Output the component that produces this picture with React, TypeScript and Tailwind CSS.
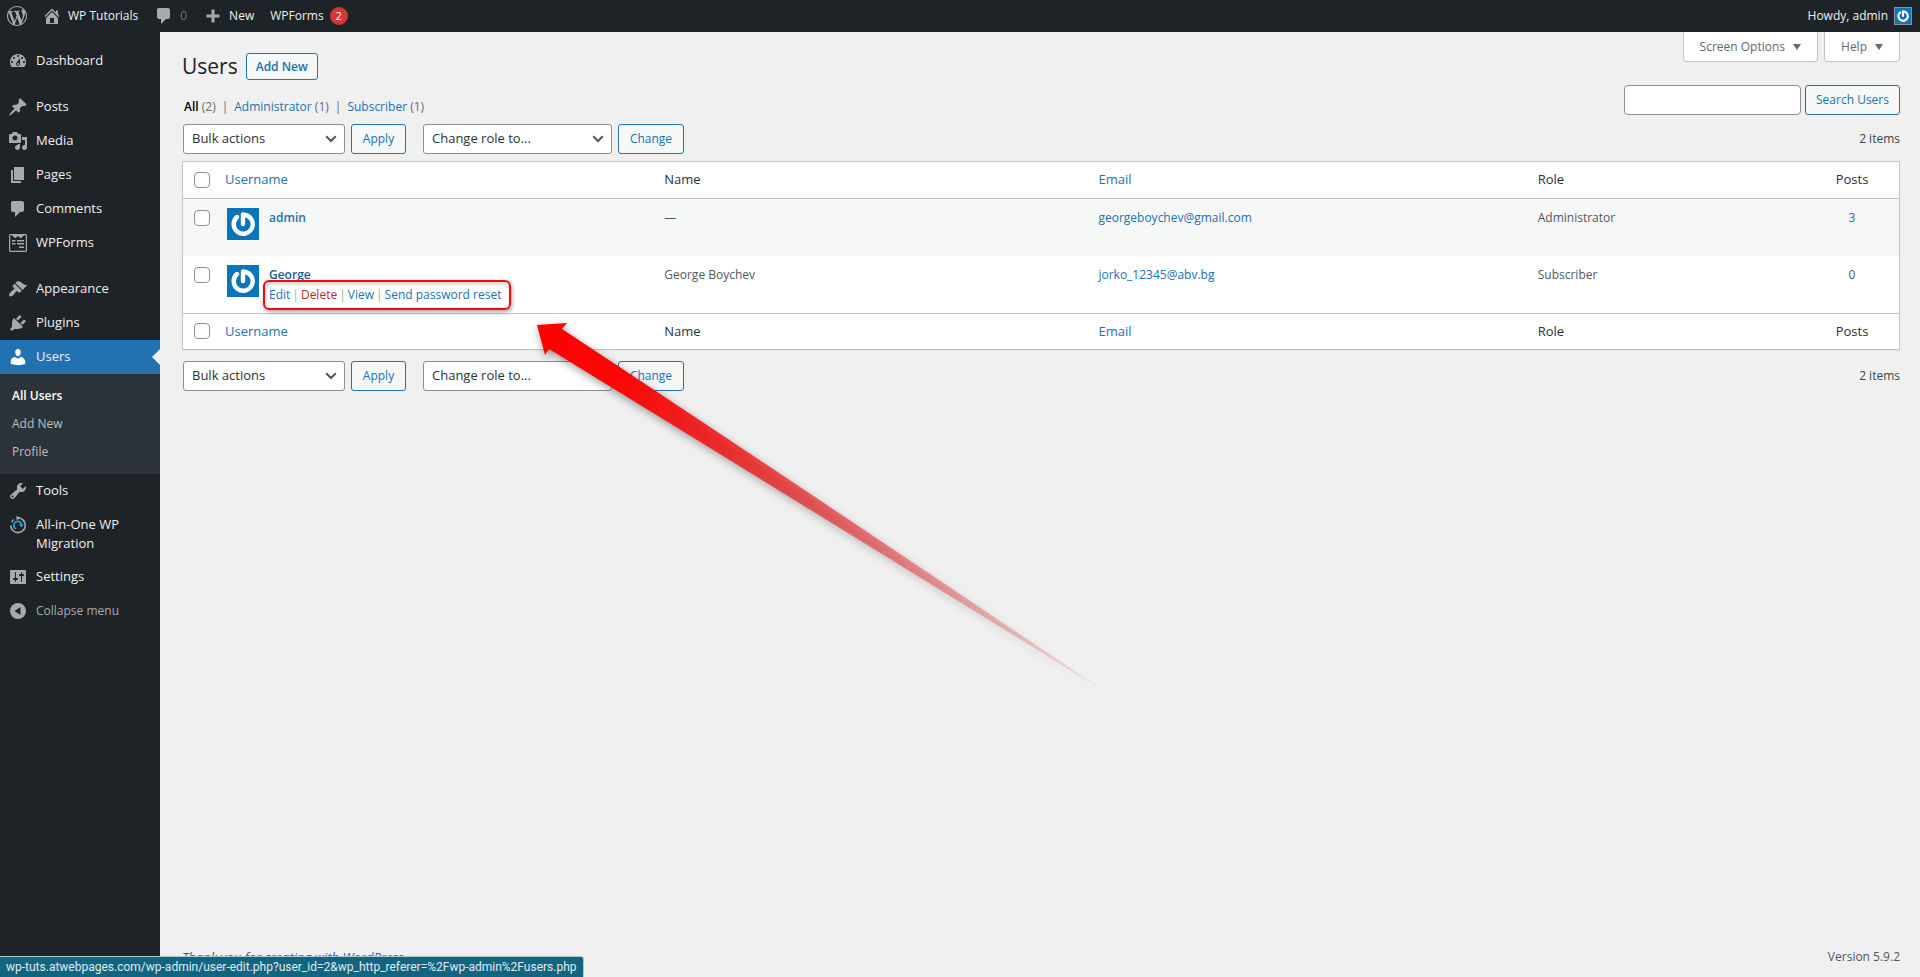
import { useState } from 'react';
import type { ReactNode } from 'react';

const icons = {
  wordpress:
    'M20 10c0-5.51-4.49-10-10-10C4.48 0 0 4.49 0 10c0 5.52 4.48 10 10 10 5.51 0 10-4.48 10-10zM7.78 15.37L4.37 6.22c.55-.02 1.17-.08 1.17-.08.5-.06.44-1.13-.06-1.11 0 0-1.45.11-2.37.11-.18 0-.37 0-.58-.01C4.12 2.69 6.87 1.11 10 1.11c2.33 0 4.45.87 6.05 2.34-.68-.11-1.65.39-1.65 1.58 0 .74.45 1.36.9 2.1.35.61.55 1.36.55 2.46 0 1.49-1.4 5-1.4 5l-3.03-8.37c.54-.02.82-.17.82-.17.5-.05.44-1.25-.06-1.22 0 0-1.44.12-2.38.12-.87 0-2.33-.12-2.33-.12-.5-.03-.56 1.2-.06 1.22l.92.08 1.26 3.41zM17.41 10c.24-.64.74-1.87.43-4.25.7 1.29 1.05 2.71 1.05 4.25 0 3.29-1.73 6.24-4.4 7.78.97-2.59 1.94-5.2 2.92-7.78zM6.1 18.09C3.12 16.65 1.11 13.53 1.11 10c0-1.3.23-2.48.72-3.59C3.25 10.3 4.67 14.2 6.1 18.09zm4.03-6.63l2.58 6.98c-.86.29-1.76.45-2.71.45-.79 0-1.57-.11-2.29-.33.81-2.38 1.62-4.74 2.42-7.1z',
  home: 'M16 8.5l1.53 1.53-1.06 1.06L10 4.6l-6.47 6.49-1.06-1.06L10 2.5l4 4v-2h2v4zm-6-2.46l6 5.99V18H4v-5.97zM12 17v-5H8v5h4z',
  plus: 'M8.5 3.5h3v5h5v3h-5v5h-3v-5h-5v-3h5z',
  dashboard:
    'M3.76 16h12.48c1.1-1.37 1.76-3.11 1.76-5 0-4.42-3.58-8-8-8s-8 3.58-8 8c0 1.89.66 3.63 1.76 5zM10 4c.55 0 1 .45 1 1s-.45 1-1 1-1-.45-1-1 .45-1 1-1zM6 6c.55 0 1 .45 1 1s-.45 1-1 1-1-.45-1-1 .45-1 1-1zm8 0c.55 0 1 .45 1 1s-.45 1-1 1-1-.45-1-1 .45-1 1-1zm-5.37 5.55L12 7v6c0 1.1-.9 2-2 2s-2-.9-2-2c0-.57.24-1.08.63-1.45zM4 10c.55 0 1 .45 1 1s-.45 1-1 1-1-.45-1-1 .45-1 1-1zm12 0c.55 0 1 .45 1 1s-.45 1-1 1-1-.45-1-1 .45-1 1-1zm-5 3c0-.55-.45-1-1-1s-1 .45-1 1 .45 1 1 1 1-.45 1-1z',
  post: 'M10.44 3.02l1.82-1.82 6.36 6.35-1.83 1.82c-1.05-.68-2.48-.57-3.41.36l-.75.75c-.92.93-1.04 2.35-.35 3.41l-1.83 1.82-2.41-2.41-2.8 2.79c-.42.42-3.38 2.71-3.8 2.29s1.86-3.39 2.28-3.81l2.79-2.79L4.1 9.36l1.83-1.82c1.05.69 2.48.57 3.4-.36l.75-.75c.93-.92 1.05-2.35.36-3.41z',
  media:
    'M13 11V4c0-.55-.45-1-1-1h-1.67L9 1H5L3.67 3H2c-.55 0-1 .45-1 1v7c0 .55.45 1 1 1h10c.55 0 1-.45 1-1zM7 4.5c1.38 0 2.5 1.12 2.5 2.5S8.38 9.5 7 9.5 4.5 8.38 4.5 7 5.62 4.5 7 4.5zM14 6h5v10.5c0 1.38-1.12 2.5-2.5 2.5S14 17.88 14 16.5s1.12-2.5 2.5-2.5c.17 0 .34.02.5.05V9h-3V6zm-4 8.05V13h2v3.5c0 1.38-1.12 2.5-2.5 2.5S7 17.88 7 16.5 8.12 14 9.5 14c.17 0 .34.02.5.05z',
  page: 'M6 15V2h10v13H6zm-1 1h8v2H3V5h2v11z',
  comment:
    'M5 2h9c1.1 0 2 .9 2 2v7c0 1.1-.9 2-2 2h-2l-5 5v-5H5c-1.1 0-2-.9-2-2V4c0-1.1.9-2 2-2z',
  forms:
    'M2.5 1h15c.8 0 1.5.7 1.5 1.5v15c0 .8-.7 1.5-1.5 1.5h-15C1.7 19 1 18.3 1 17.5v-15C1 1.7 1.7 1 2.5 1zM2.2 2.2v15.6h15.6V2.2h-1.6L12.8 5.2 10 3 7.2 5.2 3.8 2.2zM4 7h3.5v1.5H4zM9 7h7v1.5H9zM4 10h3.5v1.5H4zM9 10h7v1.5H9zM11 13.5h5V15h-5z',
  appearance:
    'M14.48 11.06L7.41 3.99l1.5-1.5c.5-.56 2.3-.47 3.51.32 1.21.8 1.43 1.28 2.91 2.1 1.18.64 2.45 1.26 4.45.85zm-.71.71L6.7 4.7 4.93 6.47c-.39.39-.39 1.02 0 1.41l1.06 1.06c.39.39.39 1.03 0 1.42-.6.6-1.43 1.11-2.21 1.69-.35.26-.7.53-1.01.84C1.43 14.23.4 16.08 1.4 17.07c.99 1 2.84-.03 4.18-1.36.31-.31.58-.66.85-1.02.57-.78 1.08-1.61 1.69-2.21.39-.39 1.02-.39 1.41 0l1.06 1.06c.39.39 1.02.39 1.41 0z',
  plugins:
    'M13.11 4.36L9.87 7.6 8 5.73l3.24-3.24c.35-.34 1.05-.2 1.56.32.52.51.66 1.21.31 1.55zm-8 1.77l.91-1.12 9.01 9.01-1.19.84c-.71.71-2.63 1.16-3.82 1.16H6.14L4.9 17.26c-.59.59-1.54.59-2.12 0-.59-.58-.59-1.53 0-2.12l1.24-1.24v-3.88c0-1.13.4-3.19 1.09-3.89zm7.26 3.97l3.24-3.24c.34-.35 1.04-.21 1.55.31.52.51.66 1.21.31 1.55l-3.24 3.25z',
  users:
    'M10 9.25c-2.27 0-2.73-3.44-2.73-3.44C7 4.02 7.82 2 9.97 2c2.16 0 2.98 2.02 2.71 3.81 0 0-.41 3.44-2.68 3.44zm0 2.57L12.72 10c2.39 0 4.52 2.33 4.52 4.53v2.49s-3.65 1.13-7.24 1.13c-3.65 0-7.24-1.13-7.24-1.13v-2.49c0-2.25 1.94-4.48 4.47-4.48z',
  tools:
    'M16.68 9.77c-1.34 1.34-3.3 1.67-4.95.99l-5.41 6.52c-.99.99-2.59.99-3.58 0s-.99-2.59 0-3.57l6.52-5.42c-.68-1.65-.35-3.61.99-4.95 1.28-1.28 3.12-1.62 4.72-1.06l-2.89 2.89 2.82 2.82 2.86-2.87c.53 1.58.18 3.39-1.08 4.65zM3.81 16.21c.4.39 1.04.39 1.43 0 .4-.4.4-1.04 0-1.43-.39-.4-1.03-.4-1.43 0-.39.39-.39 1.03 0 1.43z',
  settings:
    'M18 16V4c0-.55-.45-1-1-1H3c-.55 0-1 .45-1 1v12c0 .55.45 1 1 1h14c.55 0 1-.45 1-1zM8 11h1c.55 0 1 .45 1 1s-.45 1-1 1H8v1.5c0 .28-.22.5-.5.5s-.5-.22-.5-.5V13H6c-.55 0-1-.45-1-1s.45-1 1-1h1V5.5c0-.28.22-.5.5-.5s.5.22.5.5V11zm5-2h-1c-.55 0-1-.45-1-1s.45-1 1-1h1V5.5c0-.28.22-.5.5-.5s.5.22.5.5V7h1c.55 0 1 .45 1 1s-.45 1-1 1h-1v5.5c0 .28-.22.5-.5.5s-.5-.22-.5-.5V9z',
  collapse: 'M10 2a8 8 0 1 0 0 16 8 8 0 0 0 0-16zM12.5 6v8L6.5 10z',
};

const Icon = ({ name, className }: { name: keyof typeof icons; className?: string }) => (
  <svg viewBox="0 0 20 20" fillRule="evenodd" className={`size-5 shrink-0 fill-current ${className ?? ''}`}>
    <path d={icons[name]} />
  </svg>
);

const MigrationIcon = () => (
  <svg viewBox="0 0 20 20" fill="none" className="size-5 shrink-0">
    <path d="M10.5 3A7.3 7.3 0 1 1 2.7 10.5" stroke="#a7aaad" strokeWidth="1.6" />
    <path d="M8.5 .8L12.5 3 8.5 5.2z" fill="#a7aaad" />
    <path d="M3.6 7.2a7.3 7.3 0 0 1 2.2-2.7" stroke="#a7aaad" strokeWidth="1.4" />
    <path d="M8.2 13.8A3.9 3.9 0 1 1 13.6 10" stroke="#1e9be0" strokeWidth="1.8" />
    <path d="M10.8 9.6h4.8l-2.3 2.9z" fill="#1e9be0" />
  </svg>
);

const Avatar = ({ className }: { className: string }) => (
  <svg viewBox="0 0 32 32" className={`shrink-0 ${className}`}>
    <rect width="32" height="32" fill="#0a75b9" />
    <path
      d="M10 9A9.5 9.5 0 1 0 17.5 6.8L16 6.5V16"
      fill="none"
      stroke="#fff"
      strokeWidth="4.4"
      strokeLinecap="round"
      strokeLinejoin="round"
    />
  </svg>
);

const MenuItem = ({ icon, children }: { icon: ReactNode; children: ReactNode }) => (
  <a href="#" className="flex gap-2 px-2 py-[7px] leading-[19px] text-[#f0f0f1] hover:text-[#72aee6]">
    <span className="text-[#a7aaad]">{icon}</span>
    <span>{children}</span>
  </a>
);

const Sidebar = () => (
  <nav className="w-40 shrink-0 bg-[#1d2327] pt-3 text-[13px]">
    <MenuItem icon={<Icon name="dashboard" />}>Dashboard</MenuItem>
    <div className="h-3" />
    <MenuItem icon={<Icon name="post" />}>Posts</MenuItem>
    <MenuItem icon={<Icon name="media" />}>Media</MenuItem>
    <MenuItem icon={<Icon name="page" />}>Pages</MenuItem>
    <MenuItem icon={<Icon name="comment" />}>Comments</MenuItem>
    <MenuItem icon={<Icon name="forms" />}>WPForms</MenuItem>
    <div className="h-3" />
    <MenuItem icon={<Icon name="appearance" />}>Appearance</MenuItem>
    <MenuItem icon={<Icon name="plugins" />}>Plugins</MenuItem>
    <div className="relative bg-[#2271b1]">
      <MenuItem icon={<Icon name="users" className="text-white" />}>Users</MenuItem>
      <div className="absolute right-0 top-[9px] border-y-8 border-r-8 border-y-transparent border-r-[#f0f0f1]" />
    </div>
    <ul className="bg-[#2c3338] px-3 py-2 text-xs leading-7 text-[#bdbfc1]">
      <li><a href="#" className="font-semibold text-white">All Users</a></li>
      <li><a href="#">Add New</a></li>
      <li><a href="#">Profile</a></li>
    </ul>
    <MenuItem icon={<Icon name="tools" />}>Tools</MenuItem>
    <MenuItem icon={<MigrationIcon />}>All-in-One WP Migration</MenuItem>
    <MenuItem icon={<Icon name="settings" />}>Settings</MenuItem>
    <button className="flex w-full gap-2 px-2 py-[7px] text-left text-xs leading-[19px] text-[#a7aaad]">
      <Icon name="collapse" />
      <span>Collapse menu</span>
    </button>
  </nav>
);

const AdminBar = () => (
  <header className="flex h-8 items-center justify-between bg-[#1d2327] text-xs text-[#f0f0f1]">
    <div className="flex items-center">
      <a href="#" aria-label="About WordPress" className="px-[7px] text-[#a7aaad]"><Icon name="wordpress" /></a>
      <a href="#" className="flex items-center gap-[6px] px-2">
        <Icon name="home" className="text-[#a7aaad]" />
        <span>WP Tutorials</span>
      </a>
      <a href="#" className="flex items-center gap-[6px] px-2 text-[#a7aaad]">
        <Icon name="comment" />
        <span className="opacity-60">0</span>
      </a>
      <a href="#" className="flex items-center gap-[6px] px-2">
        <Icon name="plus" className="text-[#a7aaad]" />
        <span>New</span>
      </a>
      <a href="#" className="flex items-center gap-[6px] px-2">
        <span>WPForms</span>
        <span className="flex size-[18px] items-center justify-center rounded-full bg-[#d63638] text-[11px] text-white">2</span>
      </a>
    </div>
    <a href="#" className="flex items-center gap-[6px] px-2">
      <span>Howdy, admin</span>
      <Avatar className="size-[18px] border border-[#8c8f94]" />
    </a>
  </header>
);

const buttonClass =
  'h-[30px] rounded-[3px] border border-[#2271b1] bg-[#f6f7f7] text-xs text-[#2271b1] hover:bg-[#f0f0f1]';

const Dropdown = ({ label, className }: { label: string; className: string }) => (
  <div className={`relative ${className}`}>
    <select
      aria-label={label}
      className="h-[30px] w-full appearance-none rounded-[3px] border border-[#8c8f94] bg-white pl-2 pr-6 text-[13px] text-[#2c3338]"
    >
      <option>{label}</option>
    </select>
    <svg
      viewBox="0 0 20 20"
      className="pointer-events-none absolute right-[6px] top-[7px] size-4 fill-none stroke-[#555]"
      strokeWidth="2.5"
    >
      <path d="M4 6.5l6 6 6-6" />
    </svg>
  </div>
);

const TableNav = () => (
  <div className="flex justify-between pl-px">
    <div className="flex">
      <Dropdown label="Bulk actions" className="w-[162px]" />
      <button className={`${buttonClass} ml-[6px] w-[55px]`}>Apply</button>
      <Dropdown label="Change role to..." className="ml-[17px] w-[189px]" />
      <button className={`${buttonClass} ml-[6px] w-[66px]`}>Change</button>
    </div>
    <span className="pt-[6px] text-xs leading-[18px] text-[#3c434a]">2 items</span>
  </div>
);

const Check = ({ label, checked, onChange }: { label: string; checked: boolean; onChange: () => void }) => (
  <input
    type="checkbox"
    aria-label={label}
    checked={checked}
    onChange={onChange}
    className="block size-4 appearance-none rounded-[4px] border border-[#8c8f94] bg-white checked:bg-[#2271b1]"
  />
);

const users = [
  { login: 'admin', name: '—', email: 'georgeboychev@gmail.com', role: 'Administrator', posts: 3 },
  { login: 'George', name: 'George Boychev', email: 'jorko_12345@abv.bg', role: 'Subscriber', posts: 0 },
];

const RowActions = () => (
  <div className="relative flex w-fit gap-[2px] pr-1 text-xs leading-[18px] whitespace-nowrap text-[#a7aaad]">
    <a href="#" className="text-[#2271b1]">Edit</a>
    <span>|</span>
    <a href="#" className="text-[#b32d2e]">Delete</a>
    <span>|</span>
    <a href="#" className="text-[#2271b1]">View</a>
    <span>|</span>
    <a href="#" className="text-[#2271b1]">Send password reset</a>
    <div className="pointer-events-none absolute -inset-[6px] rounded-md border-2 border-[#f00a0a] shadow-[1px_2px_4px_rgba(0,0,0,0.35),inset_1px_2px_4px_rgba(0,0,0,0.2)]" />
  </div>
);

const UsersTable = () => {
  const [selected, setSelected] = useState<string[]>([]);
  const allSelected = selected.length === users.length;

  const toggle = (login: string) =>
    setSelected(selected.includes(login) ? selected.filter((l) => l !== login) : [...selected, login]);
  const toggleAll = () => setSelected(allSelected ? [] : users.map((u) => u.login));

  const headings = (
    <tr className="h-9 text-left text-[13px] text-[#2c3338]">
      <td className="pl-[11px]"><Check label="Select all" checked={allSelected} onChange={toggleAll} /></td>
      <th className="px-[10px] font-normal"><a href="#" className="text-[#2271b1]">Username</a></th>
      <th className="px-[10px] font-normal">Name</th>
      <th className="px-[10px] font-normal"><a href="#" className="text-[#2271b1]">Email</a></th>
      <th className="px-[10px] font-normal">Role</th>
      <th className="text-center font-normal">Posts</th>
    </tr>
  );

  return (
    <div className="border border-[#c3c4c7] bg-white shadow-[0_1px_1px_rgba(0,0,0,0.04)]">
      <table className="w-full table-fixed text-xs text-[#50575e]">
        <colgroup>
          <col className="w-8" />
          <col className="w-[25.6%]" />
          <col className="w-[25.3%]" />
          <col className="w-[25.6%]" />
          <col />
          <col className="w-[94px]" />
        </colgroup>
        <thead className="border-b border-[#c3c4c7]">{headings}</thead>
        <tbody>
          {users.map((user, i) => (
            <tr key={user.login} className="h-[57px] align-top leading-[18px] first:h-[58px] odd:bg-[#f6f7f7]">
              <td className="pt-[11px] pl-[11px]">
                <Check
                  label={`Select ${user.login}`}
                  checked={selected.includes(user.login)}
                  onChange={() => toggle(user.login)}
                />
              </td>
              <td className="px-[10px] pt-[9px]">
                <div className="flex gap-[10px] pl-[2px]">
                  <Avatar className="size-8" />
                  <div className="pt-px">
                    <a href="#" className={i === 1 ? 'block font-semibold text-[#135e96]' : 'block font-semibold text-[#2271b1]'}>
                      {user.login}
                    </a>
                    {i === 1 && <div className="pt-[2px]"><RowActions /></div>}
                  </div>
                </div>
              </td>
              <td className="px-[10px] pt-[10px]">{user.name}</td>
              <td className="px-[10px] pt-[10px]"><a href="#" className="text-[#2271b1]">{user.email}</a></td>
              <td className="px-[10px] pt-[10px]">{user.role}</td>
              <td className="pt-[10px] text-center">
                {user.posts > 0 ? <a href="#" className="text-[#2271b1]">{user.posts}</a> : user.posts}
              </td>
            </tr>
          ))}
        </tbody>
        <tfoot className="border-t border-[#c3c4c7]">{headings}</tfoot>
      </table>
    </div>
  );
};

const Arrow = () => (
  <svg
    width="600"
    height="390"
    viewBox="530 315 600 390"
    className="pointer-events-none absolute left-[530px] top-[315px] drop-shadow-[1px_3px_4px_rgba(0,0,0,0.4)]"
  >
    <defs>
      <linearGradient id="fade" gradientUnits="userSpaceOnUse" x1="537" y1="325" x2="1111" y2="695">
        <stop offset="0" stopColor="#ff0000" />
        <stop offset="0.15" stopColor="#fb0707" />
        <stop offset="1" stopColor="#de3030" stopOpacity="0.1" />
      </linearGradient>
    </defs>
    <path d="M537 325L567 323L562 329Q800 486 1107 693Q790 497 549 349L545 355Z" fill="url(#fade)" />
  </svg>
);

const ScreenTab = ({ children }: { children: ReactNode }) => (
  <button className="flex h-[30px] items-center gap-2 rounded-b border border-t-0 border-[#c3c4c7] bg-white px-4 text-xs text-[#646970]">
    {children}
    <svg viewBox="0 0 8 6" className="h-[6px] w-2 fill-[#646970]">
      <path d="M0 0h8L4 6z" />
    </svg>
  </button>
);

export default function App() {
  return (
    <div className="relative flex min-h-screen flex-col bg-[#f0f0f1] font-['Open_Sans','Noto_Sans',sans-serif]">
      <AdminBar />
      <div className="flex flex-1">
        <Sidebar />
        <main className="flex min-w-0 flex-1 flex-col pl-[22px] pr-5">
          <div className="flex items-start justify-between">
            <div className="flex items-center gap-2 pt-[21px]">
              <h1 className="text-[21px] leading-[27px] text-[#1d2327]">Users</h1>
              <a
                href="#"
                className="flex h-[27px] items-center rounded-[3px] border border-[#2271b1] bg-[#f6f7f7] px-[9px] text-xs font-semibold text-[#2271b1]"
              >
                Add New
              </a>
            </div>
            <div className="flex gap-[6px]">
              <ScreenTab>Screen Options</ScreenTab>
              <ScreenTab>Help</ScreenTab>
            </div>
          </div>

          <div className="mt-[5px] flex items-end justify-between">
            <ul className="flex gap-[6px] pl-[2px] text-xs leading-4 text-[#646970]">
              <li><a href="#" className="font-semibold text-black">All</a> (2)</li>
              <li>|</li>
              <li><a href="#" className="text-[#2271b1]">Administrator</a> (1)</li>
              <li>|</li>
              <li><a href="#" className="text-[#2271b1]">Subscriber</a> (1)</li>
            </ul>
            <form className="flex gap-1" onSubmit={(e) => e.preventDefault()}>
              <input
                type="search"
                aria-label="Search Users"
                className="h-[30px] w-[177px] rounded-[4px] border border-[#8c8f94] bg-white px-2 text-[13px]"
              />
              <button className={`${buttonClass} w-[95px]`}>Search Users</button>
            </form>
          </div>

          <div className="mt-[9px]"><TableNav /></div>
          <div className="mt-[7px]"><UsersTable /></div>
          <div className="mt-[11px]"><TableNav /></div>

          <footer className="mt-auto flex justify-between pb-[10px] text-xs leading-5 text-[#50575e]">
            <p className="text-[13px] italic">Thank you for creating with <a href="#" className="text-[#2271b1]">WordPress</a>.</p>
            <p>Version 5.9.2</p>
          </footer>
        </main>
      </div>

      <Arrow />

      {/* Link target preview */}
      <div className="absolute bottom-0 left-0 h-[21px] rounded-tr-[3px] border-t border-r border-[#b4c6ce] bg-[#13647f] px-[6px] font-['Roboto','Open_Sans',sans-serif] text-xs leading-5 text-[#e0eaee]">
        wp-tuts.atwebpages.com/wp-admin/user-edit.php?user_id=2&amp;wp_http_referer=%2Fwp-admin%2Fusers.php
      </div>
    </div>
  );
}
